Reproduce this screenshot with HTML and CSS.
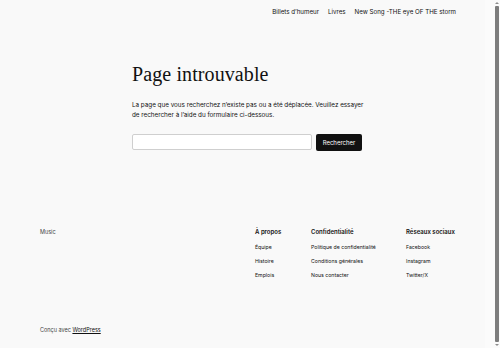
FILE: index.html
```html
<!DOCTYPE html>
<html lang="fr">
<head>
<meta charset="utf-8">
<title>Page introuvable</title>
<link rel="stylesheet" href="styles.css">
</head>
<body>
<header class="site-header">
  <nav class="main-nav">
    <a href="#">Billets d’humeur</a>
    <a href="#">Livres</a>
    <a href="#">New Song -THE eye OF THE storm</a>
  </nav>
</header>
<main class="content">
  <h1 class="title">Page introuvable</h1>
  <p class="lead">La page que vous recherchez n’existe pas ou a été déplacée. Veuillez essayer de rechercher à l’aide du formulaire ci-dessous.</p>
  <form class="search">
    <input class="search-input" type="search" aria-label="Rechercher">
    <button class="search-button" type="button">Rechercher</button>
  </form>
</main>
<footer class="site-footer">
  <div class="footer-top">
    <div class="site-title">Music</div>
    <div class="footer-cols">
      <div class="col">
        <h2 class="col-title">À propos</h2>
        <a href="#">Équipe</a>
        <a href="#">Histoire</a>
        <a href="#">Emplois</a>
      </div>
      <div class="col">
        <h2 class="col-title">Confidentialité</h2>
        <a href="#">Politique de confidentialité</a>
        <a href="#">Conditions générales</a>
        <a href="#">Nous contacter</a>
      </div>
      <div class="col">
        <h2 class="col-title">Réseaux sociaux</h2>
        <a href="#">Facebook</a>
        <a href="#">Instagram</a>
        <a href="#">Twitter/X</a>
      </div>
    </div>
  </div>
  <p class="credits">Conçu avec <a href="#">WordPress</a></p>
</footer>
<div class="scrollbar" aria-hidden="true">
  <span class="arrow arrow-up"></span>
  <span class="thumb"></span>
  <span class="arrow arrow-down"></span>
</div>
</body>
</html>
```
FILE: styles.css
```css
html {
  background: #f9f9f9;
}
body {
  margin: 0 15px 0 0;
  background: #f9f9f9;
  color: #111111;
  font-family: Inter, "Noto Sans", sans-serif;
}
a {
  color: #111111;
  text-decoration: none;
}
.site-header {
  padding: 7px 29px 0 40px;
}
.main-nav {
  display: flex;
  justify-content: flex-end;
  gap: 9px;
  font-size: 6.2px;
  line-height: 10px;
}
.content {
  width: 232px;
  margin: 45px auto 0;
  padding-left: 11px;
}
.title {
  margin: 0;
  font-family: "Liberation Serif", "DejaVu Serif", serif;
  font-weight: 400;
  font-size: 20px;
  line-height: 25px;
  letter-spacing: 0.1px;
}
.lead {
  margin: 13px 0 0;
  font-size: 6.3px;
  line-height: 10px;
}
.search {
  display: flex;
  gap: 4px;
  margin-top: 14px;
  height: 17px;
}
.search-input {
  width: 180px;
  box-sizing: border-box;
  margin: 0;
  border: 1px solid #cfcfcf;
  border-radius: 2px;
  background: #ffffff;
  height: 16px;
}
.search-button {
  width: 46px;
  margin: 0;
  padding: 0;
  border: 0;
  border-radius: 2px;
  background: #111111;
  color: #ffffff;
  font-family: Inter, "Noto Sans", sans-serif;
  font-size: 6px;
}
.site-footer {
  padding: 77px 29px 22px 40px;
}
.footer-top {
  display: flex;
  justify-content: space-between;
}
.site-title {
  font-size: 5.5px;
  line-height: 8px;
  color: #444444;
}
.footer-cols {
  display: grid;
  grid-template-columns: 56px 95px 50px;
}
.col {
  display: flex;
  flex-direction: column;
  gap: 6px;
  font-size: 5.2px;
  line-height: 8px;
}
.col-title {
  margin: 0 0 1px;
  font-size: 6px;
  font-weight: 600;
  line-height: 8px;
}
.credits {
  margin: 47px 0 0;
  font-size: 5.5px;
  line-height: 8px;
  color: #444444;
}
.credits a {
  text-decoration: underline;
}
.scrollbar {
  position: fixed;
  top: 0;
  right: 0;
  bottom: 0;
  width: 15px;
  background: #fbfbfb;
  display: flex;
  flex-direction: column;
  align-items: flex-end;
  padding-right: 1px;
  box-sizing: border-box;
}
.thumb {
  flex: 1;
  width: 4px;
  margin: 2px 0;
  background: #7d7d7d;
  border-radius: 1px;
}
.arrow {
  width: 0;
  height: 0;
  margin: 2px 0 0;
  border-left: 2px solid transparent;
  border-right: 2px solid transparent;
}
.arrow-up {
  border-bottom: 2px solid #8d8d8d;
}
.arrow-down {
  margin: 0 0 2px;
  border-top: 2px solid #8d8d8d;
}
```
